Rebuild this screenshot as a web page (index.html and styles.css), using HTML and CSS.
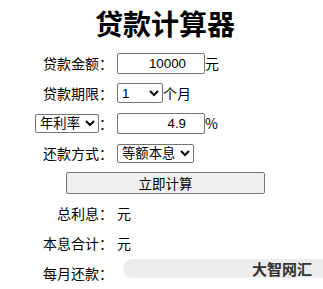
FILE: index.html
```html
<!DOCTYPE html>
<html lang="zh-CN">
<head>
<meta charset="utf-8">
<title>贷款计算器</title>
<link rel="stylesheet" href="styles.css">
</head>
<body>
<div class="calc">
  <h1 class="title">贷款计算器</h1>
  <div class="row">
    <div class="label">贷款金额：</div>
    <div class="value"><input class="num" type="text" value="10000">元</div>
  </div>
  <div class="row">
    <div class="label">贷款期限：</div>
    <div class="value"><select class="sel sel-term"><option>1</option></select>个月</div>
  </div>
  <div class="row">
    <div class="label"><select class="sel sel-rate"><option>年利率</option></select>：</div>
    <div class="value"><input class="num" type="text" value="4.9">%</div>
  </div>
  <div class="row">
    <div class="label">还款方式：</div>
    <div class="value"><select class="sel sel-way"><option>等额本息</option></select></div>
  </div>
  <div class="row row-btn">
    <button class="btn" type="button">立即计算</button>
  </div>
  <div class="row">
    <div class="label">总利息：</div>
    <div class="value">元</div>
  </div>
  <div class="row">
    <div class="label">本息合计：</div>
    <div class="value">元</div>
  </div>
  <div class="row">
    <div class="label">每月还款：</div>
    <div class="value"></div>
  </div>
</div>
<div class="badge">大智网汇</div>
</body>
</html>
```

FILE: styles.css
```css
html, body {
  margin: 0;
  padding: 0;
  background: #fff;
}
body {
  font-family: "Liberation Sans", "Noto Sans CJK SC", sans-serif;
  font-size: 14px;
  color: #000;
  width: 323px;
  height: 289px;
  overflow: hidden;
  position: relative;
}
.calc {
  margin-left: 30px;
  width: 270px;
}
.title {
  margin: 0;
  height: 48px;
  line-height: 47px;
  font-size: 28px;
  font-weight: bold;
  text-align: center;
  font-family: "Noto Sans CJK SC", sans-serif;
}
.row {
  display: grid;
  grid-template-columns: 83px 1fr;
  column-gap: 4px;
  height: 30px;
  align-items: center;
}
.label {
  text-align: right;
  white-space: nowrap;
  font-family: "Noto Sans CJK SC", sans-serif;
  font-size: 14px;
  display: flex;
  justify-content: flex-end;
  align-items: center;
}
.value {
  display: flex;
  align-items: center;
  white-space: nowrap;
  font-family: "Noto Sans CJK SC", sans-serif;
  font-size: 14px;
}
.num {
  box-sizing: border-box;
  width: 88px;
  height: 21px;
  margin: 0;
  padding: 1px 18px 1px 2px;
  border: 1px solid #767676;
  border-radius: 2px;
  text-align: right;
  font-family: "Liberation Sans", "Noto Sans CJK SC", sans-serif;
  font-size: 13.333px;
  color: #000;
}
.sel {
  box-sizing: border-box;
  margin: 0;
  height: 19px;
  font-family: "Liberation Sans", "Noto Sans CJK SC", sans-serif;
  font-size: 13.333px;
  color: #000;
  background: #fff;
  border: 1px solid #767676;
  border-radius: 2px;
}
.sel-term {
  width: 46px;
  height: 20px;
}
.sel-rate {
  width: 64px;
}
.sel-way {
  width: 77px;
}
.row-btn {
  display: flex;
  justify-content: center;
}
.btn {
  box-sizing: border-box;
  width: 199px;
  height: 22px;
  margin: 0 0 0 1px;
  padding: 0;
  background: #efefef;
  border: 1px solid #767676;
  border-radius: 2px;
  font-family: "Noto Sans CJK SC", sans-serif;
  font-size: 13.5px;
  color: #000;
}
.badge {
  position: absolute;
  right: 0;
  top: 259px;
  width: 200px;
  height: 19px;
  box-sizing: border-box;
  padding-right: 11px;
  background: #ececec;
  border-radius: 10px 0 0 10px;
  text-align: right;
  font-family: "Noto Sans CJK SC", sans-serif;
  font-weight: bold;
  font-size: 15px;
  line-height: 19px;
  color: #333;
}
```
